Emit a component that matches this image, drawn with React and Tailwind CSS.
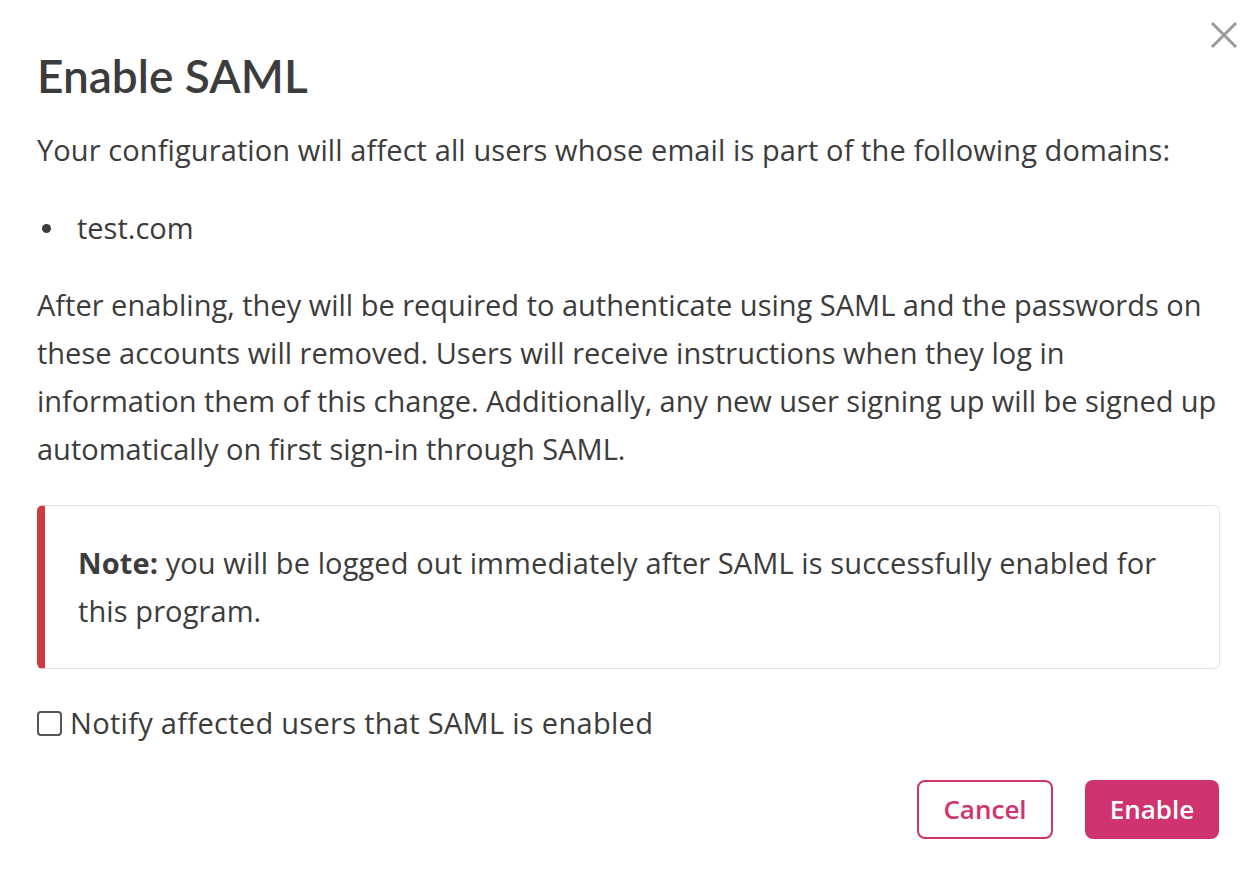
import React, { useState } from "react";

const EnableSamlModal = () => {
  const [notify, setNotify] = useState(false);

  return (
    <div className="relative min-h-screen w-full bg-white text-[#3c3c3c] font-['Open_Sans','Noto_Sans',sans-serif]">
      <button
        type="button"
        aria-label="Close"
        className="absolute right-[22px] top-[21px] w-[28px] h-[28px] flex items-center justify-center text-[#9a9a9a]"
      >
        <svg width="28" height="28" viewBox="0 0 28 28" fill="none" stroke="currentColor" strokeWidth="3">
          <path d="M2 2 L26 26 M26 2 L2 26" />
        </svg>
      </button>

      <div className="pl-[37px] pr-[40px] pt-[48px]">
        <h2 className="text-[46px] leading-[56px] font-semibold text-[#3c3c3c] font-['Lato',sans-serif]">Enable SAML</h2>

        <p className="mt-[22px] text-[29px] leading-[48px] tracking-[0.1px]">
          Your configuration will affect all users whose email is part of the following domains:
        </p>

        <ul className="mt-[30px] text-[29px] leading-[48px]">
          <li className="flex items-center">
            <span className="w-[9px] h-[9px] rounded-full bg-[#3c3c3c] ml-[5px] mr-[26px]" />
            <span>test.com</span>
          </li>
        </ul>

        <p className="mt-[29px] text-[29px] leading-[48px] whitespace-nowrap">
          After enabling, they will be required to authenticate using SAML and the passwords on
          <br />
          these accounts will removed. Users will receive instructions when they log in
          <br />
          <span className="tracking-[-0.05px]">information them of this change. Additionally, any new user signing up will be signed up</span>
          <br />
          automatically on first sign-in through SAML.
        </p>

        <div className="mt-[32px] border border-[#e4e4e4] border-l-[8px] border-l-[#d03b3f] rounded-[6px] pl-[33px] pr-[24px] py-[33px] text-[29px] leading-[48px] whitespace-nowrap tracking-[0.1px]">
          <span className="font-bold">Note:</span> you will be logged out immediately after SAML is
          successfully enabled for
          <br />
          this program.
        </div>

        <label className="mt-[36px] flex items-center gap-[8px] text-[29px] leading-[36px] tracking-[0.3px] cursor-pointer">
          <input
            type="checkbox"
            checked={notify}
            onChange={(e) => setNotify(e.target.checked)}
            className="appearance-none w-[25px] h-[25px] border-2 border-[#555] rounded-[4px] bg-white"
          />
          Notify affected users that SAML is enabled
        </label>

        <div className="mt-[39px] flex justify-end gap-[32px] pr-[1px]">
          <button
            type="button"
            className="w-[136px] h-[59px] rounded-[8px] border-2 border-[#cf3370] text-[#cf3370] text-[26px] font-semibold"
          >
            Cancel
          </button>
          <button
            type="button"
            className="w-[134px] h-[59px] rounded-[8px] bg-[#cf3370] text-white text-[26px] font-semibold"
          >
            Enable
          </button>
        </div>
      </div>
    </div>
  );
};

export default function App() {
  return <EnableSamlModal />;
}
